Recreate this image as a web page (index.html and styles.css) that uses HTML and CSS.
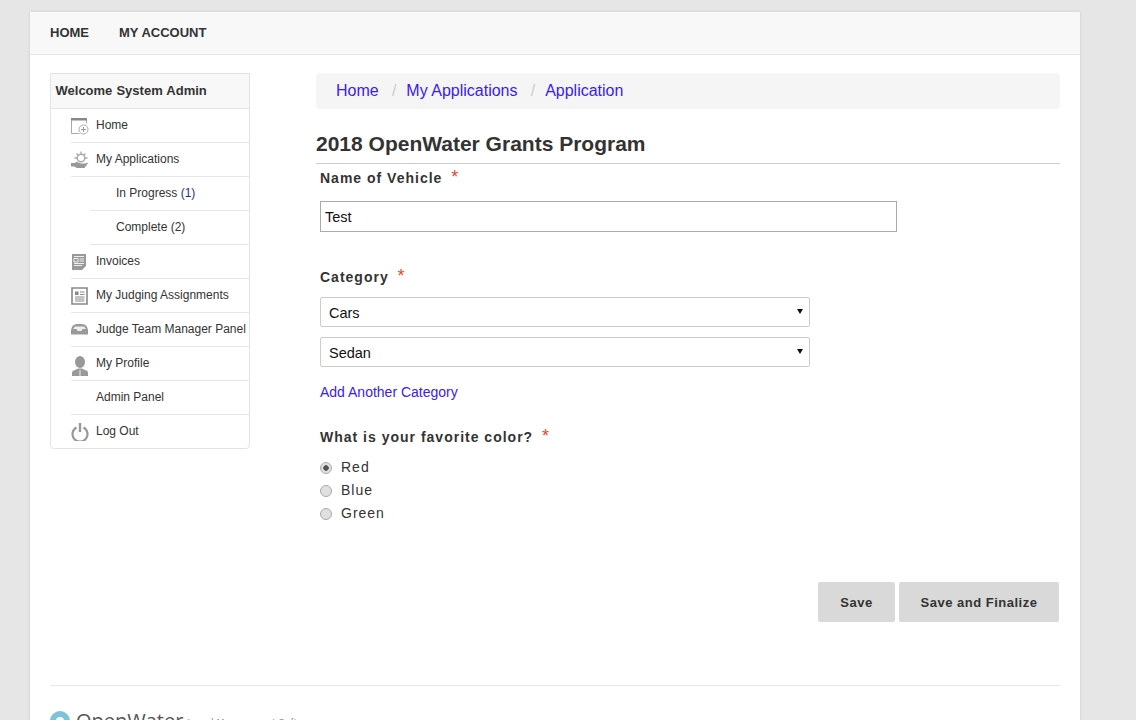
FILE: index.html
```html
<!DOCTYPE html>
<html lang="en">
<head>
<meta charset="utf-8">
<title>2018 OpenWater Grants Program</title>
<link rel="stylesheet" href="styles.css">
</head>
<body>
<div class="page">
  <nav class="topnav">
    <a href="#">HOME</a>
    <a href="#">MY ACCOUNT</a>
  </nav>
  <div class="content">
    <aside class="side">
      <div class="side-head">Welcome System Admin</div>
      <ul class="menu">
        <li class="item"><svg class="ic" viewBox="0 0 18 18"><path d="M.5 1.500h15v5M.5 1.500v15h8" fill="none" stroke="#aaa"/><path d="M0 1h16v2.500H0z" fill="#888"/><circle cx="12.500" cy="12.500" r="4.500" fill="#fff" stroke="#aaa"/><path d="M12.500 10v5M10 12.500h5" stroke="#999"/></svg><a href="#">Home</a></li>
        <li class="item"><svg class="ic" viewBox="0 0 18 18"><circle cx="10" cy="7" r="3.800" fill="#fff" stroke="#aaa" stroke-width="1.500"/><path d="M10 .5v2.500M3.500 7h2.500M14 7h2.500M5.500 2.500l1.800 1.800M14.500 2.500l-1.800 1.800" stroke="#aaa" stroke-width="1.300"/><path d="M0 12h3l3-1 4 1.500h4l3.500-1-4 5.500H6l-3-1.500H0z" fill="#999"/></svg><a href="#">My Applications</a></li>
        <li class="item sub"><a href="#">In Progress <span class="count">(1)</span></a></li>
        <li class="item sub"><a href="#">Complete (2)</a></li>
        <li class="item"><svg class="ic" viewBox="0 0 18 18"><path d="M1 1h14v12l-4 4H1z" fill="#999"/><path d="M3 3.500h10M8.500 6h4.500M8.500 8h4.500M3 10.500h10M3 12.500h8" stroke="#eee"/><path d="M3 5.500h4v3.500H3z" fill="none" stroke="#eee"/></svg><a href="#">Invoices</a></li>
        <li class="item"><svg class="ic" viewBox="0 0 18 18"><path d="M1 1h15v16H1z" fill="#fff" stroke="#888" stroke-width="1.600"/><path d="M4 4.500h3.500V8H4z" fill="#888"/><path d="M9 5h4.500M9 7.500h4.500M4 10h9.500M4 12h9.500M4 14h9.500" stroke="#888"/></svg><a href="#">My Judging Assignments</a></li>
        <li class="item"><svg class="ic" viewBox="0 0 18 18"><path d="M0 9Q1 3 6 3h5q5 0 6 6v4.500H0z" fill="#999"/><path d="M4 5.500h9l2 2.500h-3.500l-1 2h-4l-1-2H2z" fill="#eee"/></svg><a href="#">Judge Team Manager Panel</a></li>
        <li class="item"><svg class="ic" viewBox="0 0 18 20"><ellipse cx="9" cy="6" rx="5" ry="6" fill="#999"/><path d="M1 20v-3q0-2.500 3-3l3-1.500h4l3 1.500q3 .5 3 3v3z" fill="#999"/><path d="M9 14v6" stroke="#eee"/></svg><a href="#">My Profile</a></li>
        <li class="item"><a href="#">Admin Panel</a></li>
        <li class="item"><svg class="ic" viewBox="0 0 18 18"><path d="M5.500 4.500a7.500 7.500 0 1 0 7 0" fill="none" stroke="#999" stroke-width="2.200"/><path d="M9 0v9" stroke="#999" stroke-width="2.400"/></svg><a href="#">Log Out</a></li>
      </ul>
    </aside>
    <main class="main">
      <ol class="crumbs">
        <li><a href="#">Home</a></li>
        <li><a href="#">My Applications</a></li>
        <li><a href="#">Application</a></li>
      </ol>
      <h1 class="title">2018 OpenWater Grants Program</h1>
      <form class="form">
        <label class="label name-label">Name of Vehicle <span class="req">*</span></label>
        <input class="text-input" type="text" value="Test">
        <label class="label cat-label">Category <span class="req">*</span></label>
        <div class="sel-wrap"><select class="sel"><option>Cars</option></select></div>
        <div class="sel-wrap sel-second"><select class="sel"><option>Sedan</option></select></div>
        <a class="add" href="#">Add Another Category</a>
        <label class="label color-label">What is your favorite color? <span class="req">*</span></label>
        <div class="radios">
          <label class="radio"><input type="radio" name="color" checked>Red</label>
          <label class="radio"><input type="radio" name="color">Blue</label>
          <label class="radio"><input type="radio" name="color">Green</label>
        </div>
        <div class="actions">
          <button class="btn btn-save" type="button">Save</button>
          <button class="btn btn-final" type="button">Save and Finalize</button>
        </div>
      </form>
    </main>
  </div>
  <footer class="footer">
    <div class="brand">
      <svg class="logo" viewBox="0 0 20 20"><circle cx="10" cy="10" r="10" fill="#7cc5d8"/><circle cx="10" cy="10" r="4" fill="#fff"/></svg>
      <span class="brand-name">OpenWater</span>
      <span class="brand-tag">Award Management Software</span>
    </div>
  </footer>
</div>
</body>
</html>
```
FILE: styles.css
```css
* { box-sizing: border-box; }
html, body { height: 720px; overflow: hidden; }
body {
  margin: 0;
  background: #e6e6e6;
  font-family: "Liberation Sans", Arial, sans-serif;
  color: #333;
}
a { text-decoration: none; }
.page {
  width: 1050px;
  margin: 12px 0 0 30px;
  height: 760px;
  background: #fff;
  box-shadow: 0 0 3px rgba(0,0,0,.12);
}
.topnav {
  height: 43px;
  background: #f8f8f8;
  border-bottom: 1px solid #e7e7e7;
  display: flex;
  align-items: center;
  gap: 30px;
  padding: 0 20px 1px;
}
.topnav a {
  font-size: 13px;
  font-weight: bold;
  color: #333;
}
.content {
  display: flex;
  padding: 18px 20px 0;
  gap: 66px;
}
.side {
  width: 200px;
  flex: none;
  height: 376px;
  border: 1px solid #e3e3e3;
  border-radius: 0 0 4px 4px;
}
.side-head {
  height: 35px;
  padding-left: 4.500px;
  background: #f8f8f8;
  border-bottom: 1px solid #e3e3e3;
  font-size: 13px;
  font-weight: bold;
  line-height: 33px;
  color: #333;
  word-spacing: .5px;
}
.menu { list-style: none; margin: 0; padding: 0; }
.item {
  position: relative;
  height: 34px;
  margin-left: 20px;
  padding-left: 25px;
  border-bottom: 1px solid #e6e6e6;
  font-size: 12px;
  line-height: 33px;
  white-space: nowrap;
}
.item:last-child { border-bottom: 0; }
.item a { color: #333; }
.item.sub { margin-left: 39px; padding-left: 26px; }
.count { color: #2b2b7a; }
.ic {
  position: absolute;
  left: 0;
  top: 8px;
  width: 18px;
  height: 18px;
}
.item:nth-child(8) .ic { top: 9px; height: 20px; }
.main { width: 744px; flex: none; }
.crumbs {
  list-style: none;
  margin: 0;
  height: 36px;
  padding: 0 20px;
  background: #f5f5f5;
  border-radius: 4px;
  display: flex;
  align-items: center;
  font-size: 16px;
}
.crumbs a { color: #3a20f0; }
.crumbs li + li::before {
  content: "/";
  color: #ccc;
  padding: 0 10px 0 13.200px;
}
.title {
  margin: 22px 0 0;
  height: 33px;
  border-bottom: 1px solid #ccc;
  font-size: 21px;
  line-height: 26px;
  font-weight: bold;
  color: #333;
}
.form { display: flex; flex-direction: column; align-items: flex-start; padding-left: 4px; }
.label {
  font-size: 14px;
  font-weight: bold;
  letter-spacing: 1px;
  line-height: 16px;
  color: #333;
}
.req { color: #e0492a; font-weight: normal; margin-left: 4px; font-size: 18px; line-height: 0; }
.name-label { margin-top: 6px; }
.text-input {
  margin-top: 15px;
  width: 577px;
  height: 31px;
  border: 1px solid #aaa;
  padding: 0 4px;
  font: 14.500px "Liberation Sans", Arial, sans-serif;
  color: #111;
}
.cat-label { margin-top: 37px; }
.sel-wrap { position: relative; margin-top: 12px; height: 30px; }
.sel-wrap::after {
  content: "";
  position: absolute;
  right: 7px;
  top: 12px;
  border-style: solid;
  border-width: 5px 3px 0;
  border-color: #111 transparent transparent;
  pointer-events: none;
}
.sel-second { margin-top: 10px; }
.sel {
  display: block;
  appearance: none;
  width: 490px;
  height: 30px;
  padding: 2px 8px 0;
  border: 1px solid #ccc;
  border-radius: 2px;
  background: #fff;
  font: 14.500px "Liberation Sans", Arial, sans-serif;
  color: #111;
}
.add {
  margin-top: 17px;
  font-size: 14px;
  line-height: 16px;
  color: #3a20f0;
}
.color-label { margin-top: 29px; }
.radios { margin-top: 10px; display: flex; flex-direction: column; }
.radio {
  display: flex;
  align-items: center;
  height: 23px;
  font-size: 14px;
  letter-spacing: 1px;
  color: #333;
}
.radio input {
  appearance: none;
  margin: 2px 9px 0 0;
  width: 12px;
  height: 12px;
  border: 1px solid #aaa;
  border-radius: 50%;
  background: #e0e0e0;
}
.radio input:checked {
  background: radial-gradient(circle, #555 0 2.500px, #e0e0e0 3px);
}
.actions {
  width: 739px;
  margin-top: 58px;
  display: flex;
  justify-content: flex-end;
  gap: 4px;
}
.btn {
  height: 40px;
  border: 0;
  border-radius: 2px;
  background: #d9d9d9;
  font: bold 13px "Liberation Sans", Arial, sans-serif;
  letter-spacing: .5px;
  color: #333;
}
.btn-save { width: 77px; }
.btn-final { width: 160px; }
.footer {
  margin: 63px 20px 0;
  border-top: 1px solid #e7e7e7;
  padding-top: 25px;
}
.brand { display: flex; align-items: flex-start; }
.logo { width: 20px; height: 20px; flex: none; }
.brand-name {
  margin-left: 6px;
  font-family: "Open Sans", sans-serif;
  font-size: 20px;
  line-height: 20px;
  color: #555;
}
.brand-tag {
  margin: 6px 0 0 2px;
  font-size: 9px;
  letter-spacing: .6px;
  color: #888;
}
```
